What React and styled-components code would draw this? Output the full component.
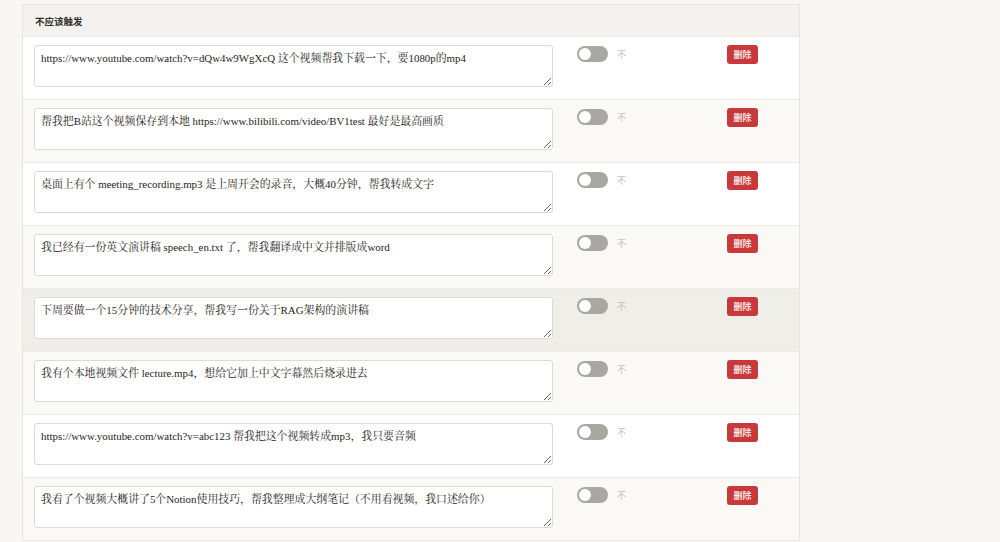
import React from 'react';
import styled, { createGlobalStyle } from 'styled-components';

const GlobalStyle = createGlobalStyle`
  html, body {
    margin: 0;
    padding: 0;
    background: #f8f7f4;
  }
  * {
    box-sizing: border-box;
  }
`;

const cases = [
  'https://www.youtube.com/watch?v=dQw4w9WgXcQ 这个视频帮我下载一下，要1080p的mp4',
  '帮我把B站这个视频保存到本地 https://www.bilibili.com/video/BV1test 最好是最高画质',
  '桌面上有个 meeting_recording.mp3 是上周开会的录音，大概40分钟，帮我转成文字',
  '我已经有一份英文演讲稿 speech_en.txt 了，帮我翻译成中文并排版成word',
  '下周要做一个15分钟的技术分享，帮我写一份关于RAG架构的演讲稿',
  '我有个本地视频文件 lecture.mp4，想给它加上中文字幕然后烧录进去',
  'https://www.youtube.com/watch?v=abc123 帮我把这个视频转成mp3，我只要音频',
  '我看了个视频大概讲了5个Notion使用技巧，帮我整理成大纲笔记（不用看视频，我口述给你）',
];

const Page = styled.div`
  padding: 4px 0 0 22px;
  height: 542px;
  overflow: hidden;
`;

const Panel = styled.section`
  width: 778px;
  border: 1px solid #e7e5e0;
  border-bottom: none;
  background: #ffffff;
`;

const Header = styled.header`
  height: 32px;
  display: flex;
  align-items: center;
  padding-left: 12px;
  background: #f4f2ee;
  border-bottom: 1px solid #ebe9e4;
  font-family: 'Noto Sans CJK SC', sans-serif;
  font-size: 9.5px;
  font-weight: 700;
  color: #2f2d2a;
`;

const Row = styled.div`
  display: grid;
  grid-template-columns: 519px 126px 31px;
  column-gap: 24px;
  align-items: start;
  height: 63px;
  padding: 8px 0 0 11px;
  border-bottom: 1px solid #ebe9e4;
  background: ${p => (p.$hover ? '#efeee9' : p.$alt ? '#faf9f6' : '#ffffff')};
`;

const Input = styled.textarea`
  width: 519px;
  height: 42px;
  padding: 5px 6px;
  border: 1px solid #dcdad5;
  border-radius: 3px;
  background: #ffffff;
  font-family: 'Liberation Serif', 'Noto Serif CJK SC', 'Noto Sans CJK SC', serif;
  font-size: 10.9px;
  line-height: 15px;
  color: #1f1d1b;
  resize: vertical;
  outline: none;
`;

const ToggleCell = styled.div`
  display: flex;
  align-items: center;
  gap: 9px;
  padding-top: 1px;
`;

const Switch = styled.span`
  position: relative;
  width: 31px;
  height: 16px;
  border-radius: 8px;
  background: #a9a7a2;

  &::after {
    content: '';
    position: absolute;
    top: 2px;
    left: 2px;
    width: 12px;
    height: 12px;
    border-radius: 50%;
    background: #ffffff;
  }
`;

const Hint = styled.span`
  font-family: 'Noto Sans CJK SC', sans-serif;
  font-size: 9px;
  color: #c4c2bd;
`;

const DeleteButton = styled.button`
  width: 31px;
  height: 19px;
  padding: 0;
  border: none;
  border-radius: 3px;
  background: #c8393b;
  color: #ffffff;
  font-family: 'Noto Sans CJK SC', sans-serif;
  font-size: 9px;
  font-weight: 500;
  cursor: pointer;
`;

export default function App() {
  return (
    <>
      <GlobalStyle />
      <Page>
        <Panel>
          <Header>不应该触发</Header>
          {cases.map((text, i) => (
            <Row key={i} $alt={i % 2 === 1} $hover={i === 4}>
              <Input defaultValue={text} />
              <ToggleCell>
                <Switch />
                <Hint>不</Hint>
              </ToggleCell>
              <DeleteButton>删除</DeleteButton>
            </Row>
          ))}
        </Panel>
      </Page>
    </>
  );
}
